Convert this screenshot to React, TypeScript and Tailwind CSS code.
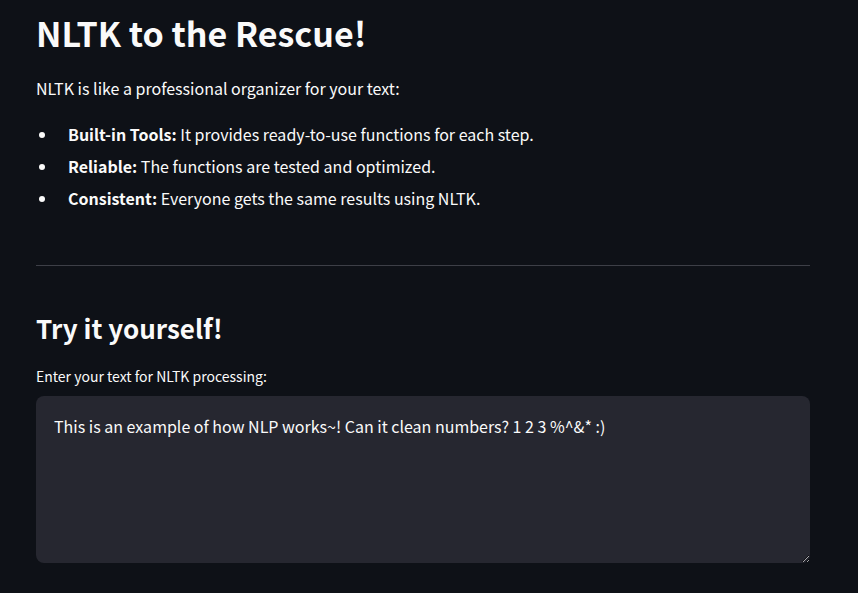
import React from "react";

const points = [
  { term: "Built-in Tools:", text: "It provides ready-to-use functions for each step." },
  { term: "Reliable:", text: "The functions are tested and optimized." },
  { term: "Consistent:", text: "Everyone gets the same results using NLTK." },
];

export default function App() {
  return (
    <main className="min-h-screen bg-[#0e1117] pl-9 pr-12 pt-3 pb-7 font-['Noto_Sans_CJK_SC','Noto_Sans',sans-serif] text-base text-[#fafafa]">
      <h1 className="text-[34px] leading-[42px] font-bold">NLTK to the Rescue!</h1>
      <p className="mt-5 leading-7">NLTK is like a professional organizer for your text:</p>
      <ul className="mt-4 list-disc pl-[22px] leading-8">
        {points.map((point) => (
          <li key={point.term} className="pl-[10px]">
            <strong className="font-bold">{point.term}</strong> {point.text}
          </li>
        ))}
      </ul>
      <hr className="mt-[51px] border-[#3d3f47]" />
      <h2 className="mt-[42px] text-[26px] leading-10 font-bold">Try it yourself!</h2>
      <label htmlFor="text" className="mt-4 block text-sm leading-6">
        Enter your text for NLTK processing:
      </label>
      <textarea
        id="text"
        className="mt-2 block h-[167px] w-full resize-y rounded-lg bg-[#262730] px-[18px] py-4 leading-7 outline-none"
        defaultValue="This is an example of how NLP works~! Can it clean numbers? 1 2 3 %^&* :)"
      />
    </main>
  );
}
